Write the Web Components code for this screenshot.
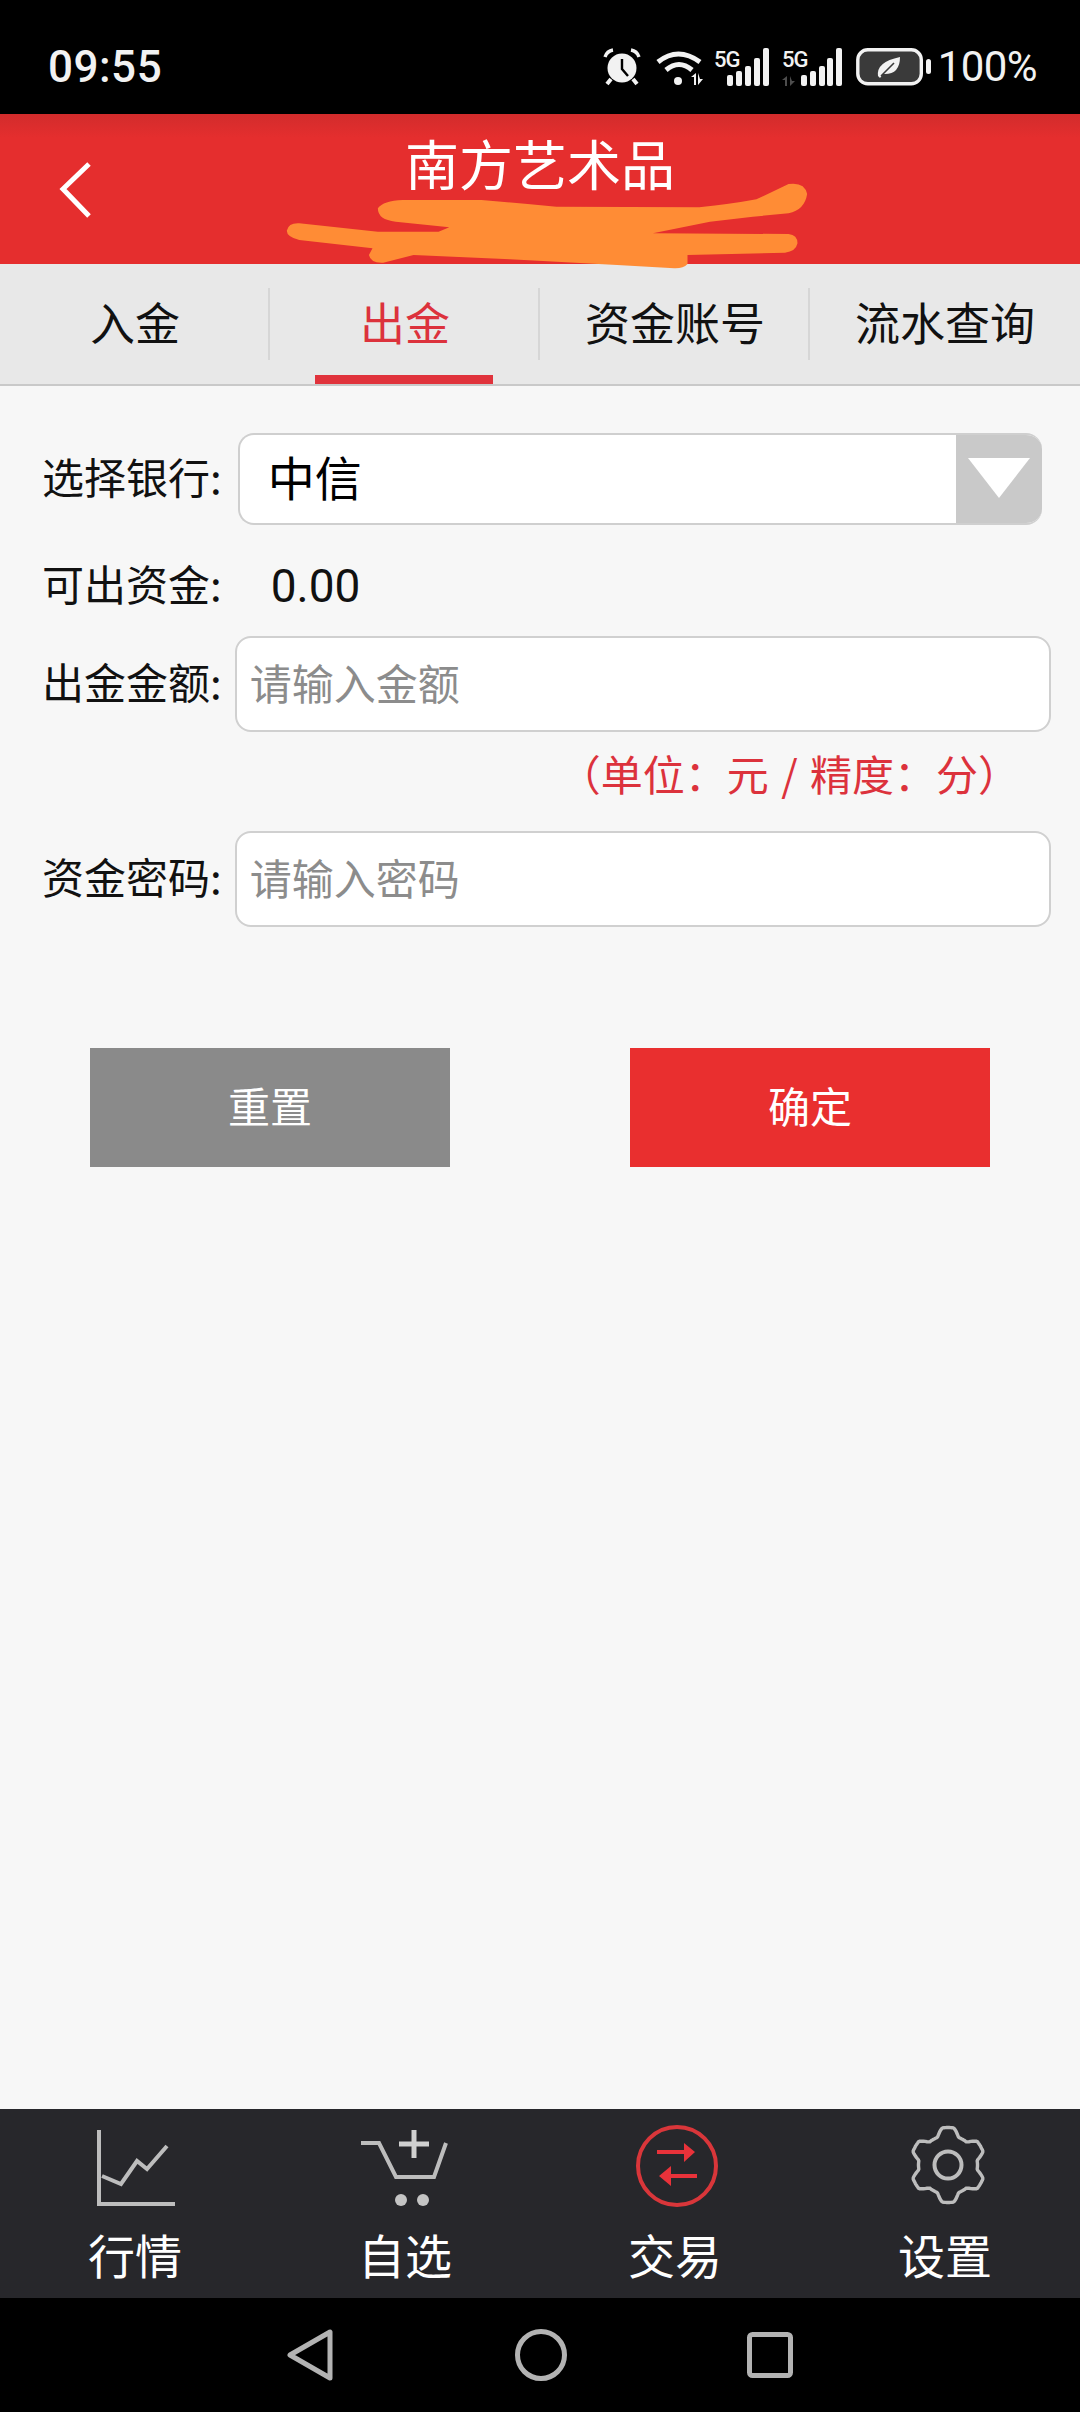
<!DOCTYPE html>
<html lang="zh-CN">
<head>
<meta charset="utf-8">
<title>出金</title>
<style>
  html, body { margin: 0; padding: 0; }
  body {
    width: 1080px;
    height: 2412px;
    overflow: hidden;
    display: flex;
    flex-direction: column;
    background: #f7f7f7;
    font-family: "Noto Sans CJK SC", "Noto Sans", sans-serif;
  }
  withdraw-form { flex: 1; }
</style>
</head>
<body>
  <status-bar time="09:55" level="100%"></status-bar>
  <app-header>南方艺术品</app-header>
  <tab-bar>
    <tab-item>入金</tab-item>
    <tab-item active>出金</tab-item>
    <tab-item>资金账号</tab-item>
    <tab-item>流水查询</tab-item>
  </tab-bar>
  <withdraw-form></withdraw-form>
  <bottom-nav>
    <nav-item icon="chart">行情</nav-item>
    <nav-item icon="cart">自选</nav-item>
    <nav-item icon="trade">交易</nav-item>
    <nav-item icon="gear">设置</nav-item>
  </bottom-nav>
  <system-nav></system-nav>

<script>
/* 상단 상태바 */
class StatusBar extends HTMLElement {
  constructor() {
    super();
    this.attachShadow({ mode: "open" });
    const bars = (xs) => {
      const hs = [11, 15, 20, 28, 38];
      return xs.map((x, i) => `<rect x="${x}" y="${38 - hs[i]}" width="6" height="${hs[i]}" rx="2" fill="#f2f2f2"/>`).join("");
    };
    this.shadowRoot.innerHTML = `
      <style>
        :host {
          display: flex;
          align-items: center;
          height: 114px;
          flex: none;
          padding: 20px 43px 0 48px;
          box-sizing: border-box;
          background: #000;
          color: #f2f2f2;
          font-family: Roboto, "Noto Sans", sans-serif;
        }
        .time { font-size: 44px; font-weight: 500; line-height: 50px; letter-spacing: .5px; }
        .icons { display: flex; align-items: center; margin-left: auto; }
        svg { display: block; flex: none; }
        .wifi { margin-left: 15px; }
        .sig1 { margin-left: 10px; }
        .sig2 { margin-left: 11px; }
        .batt { margin-left: 14px; }
        .level { font-size: 42px; font-weight: 400; line-height: 50px; margin-left: 7px; letter-spacing: -.6px; }
      </style>
      <div class="time"></div>
      <div class="icons">
        <svg width="38" height="38" viewBox="0 0 38 38">
          <circle cx="19" cy="20" r="14.5" fill="#f2f2f2"/>
          <path d="M19 11v10l6 7" fill="none" stroke="#000" stroke-width="2.4"/>
          <path d="M2 9Q4 3 10 2M36 9Q34 3 28 2" fill="none" stroke="#f2f2f2" stroke-width="3.4"/>
          <path d="M8 31l-4 5M30 31l4 5" stroke="#f2f2f2" stroke-width="4"/>
        </svg>
        <svg class="wifi" width="48" height="36" viewBox="0 0 48 36">
          <path d="M2 13Q22 -3 44 13" fill="none" stroke="#f2f2f2" stroke-width="5"/>
          <path d="M10 21Q23 10 36 21" fill="none" stroke="#f2f2f2" stroke-width="5"/>
          <circle cx="22" cy="32" r="4" fill="#f2f2f2"/>
          <path d="M40 24v12h-2v-8l-3 0zM42 24v12l5-6h-3z" fill="#f2f2f2"/>
        </svg>
        <svg class="sig1" width="57" height="38" viewBox="0 0 57 38">
          <text x="0" y="19" font-family="Roboto" font-size="22" font-weight="500" letter-spacing="-1" fill="#f2f2f2">5G</text>
          ${bars([13, 22, 31, 40, 49])}
        </svg>
        <svg class="sig2" width="60" height="38" viewBox="0 0 60 38">
          <text x="0" y="19" font-family="Roboto" font-size="22" font-weight="500" letter-spacing="-1" fill="#f2f2f2">5G</text>
          <path d="M5 28v10h-2v-6l-3 0zM8 28v10l5-5h-3z" fill="#4d4d4d"/>
          ${bars([19, 28, 37, 45, 54])}
        </svg>
        <svg class="batt" width="75" height="38" viewBox="0 0 75 38">
          <rect x="1.8" y="1.8" width="63.5" height="34" rx="10" fill="#3a3a3a" stroke="#f2f2f2" stroke-width="3.4"/>
          <rect x="70" y="11" width="5" height="15" rx="2.5" fill="#f2f2f2"/>
          <path d="M22 28Q20 14 44 9Q44 27 27 26L24 30z" fill="#f2f2f2"/>
          <path d="M25 28L38 15" stroke="#3a3a3a" stroke-width="1.6"/>
        </svg>
        <div class="level"></div>
      </div>`;
    this.shadowRoot.querySelector(".time").textContent = this.getAttribute("time");
    this.shadowRoot.querySelector(".level").textContent = this.getAttribute("level");
  }
}
customElements.define("status-bar", StatusBar);

/* 헤더 + 주황색 낙서 */
class AppHeader extends HTMLElement {
  constructor() {
    super();
    this.attachShadow({ mode: "open" });
    this.shadowRoot.innerHTML = `
      <style>
        :host {
          display: block;
          position: relative;
          z-index: 2;
          flex: none;
          height: 150px;
          padding-top: 17px;
          box-sizing: border-box;
          background: linear-gradient(#d22c2c, #e52e2e 24px);
          color: #fff;
          text-align: center;
          font-size: 54px;
          line-height: 64px;
        }
        .back { position: absolute; left: 55px; top: 44px; }
        .scrawl { position: absolute; left: 260px; top: 6px; }
      </style>
      <svg class="back" width="40" height="64" viewBox="0 0 40 64">
        <path d="M34 6L8 31L34 58" fill="none" stroke="#fff" stroke-width="5"/>
      </svg>
      <slot></slot>
      <svg class="scrawl" width="560" height="160" viewBox="0 0 1568 480" preserveAspectRatio="none">
        <path fill="#ff8c35" d="M330 265Q345 242 400 240L620 240Q730 250 830 260L1230 262Q1320 252 1390 238L1480 192Q1525 185 1532 222Q1525 270 1480 280L1380 290L1260 305L1100 340L1480 342Q1505 345 1505 370Q1500 395 1470 398L1197 405L1197 432Q1185 446 1160 445L1000 435L700 418L430 405L345 428Q310 430 305 405L315 385L110 360Q75 350 75 332Q80 308 110 310L330 335L500 335L530 322L380 305Q330 300 330 265Z"/>
      </svg>`;
  }
}
customElements.define("app-header", AppHeader);

class TabBar extends HTMLElement {
  constructor() {
    super();
    this.attachShadow({ mode: "open" });
    this.shadowRoot.innerHTML = `
      <style>
        :host {
          display: grid;
          grid-template-columns: repeat(4, 1fr);
          flex: none;
          height: 122px;
          box-sizing: border-box;
          background: #e8e8e8;
          border-bottom: 2px solid #c9c9c9;
        }
      </style>
      <slot></slot>`;
  }
}
customElements.define("tab-bar", TabBar);

class TabItem extends HTMLElement {
  constructor() {
    super();
    this.attachShadow({ mode: "open" });
    this.shadowRoot.innerHTML = `
      <style>
        :host {
          display: flex;
          position: relative;
          justify-content: center;
          padding-top: 26px;
          box-sizing: border-box;
          font-size: 45px;
          line-height: 64px;
          color: #111;
        }
        :host(:not(:last-child))::after {
          content: "";
          position: absolute;
          right: 0;
          top: 24px;
          width: 2px;
          height: 72px;
          background: #d6d6d6;
        }
        :host([active]) { color: #dc323c; }
        :host([active])::before {
          content: "";
          position: absolute;
          left: 45px;
          bottom: 0;
          width: 178px;
          height: 9px;
          background: #e0333c;
        }
      </style>
      <slot></slot>`;
  }
}
customElements.define("tab-item", TabItem);

class FormRow extends HTMLElement {
  constructor() {
    super();
    this.attachShadow({ mode: "open" });
    this.shadowRoot.innerHTML = `
      <style>
        :host {
          display: flex;
          align-items: center;
          font-size: 42px;
          color: #111;
        }
        .label { flex: none; white-space: nowrap; padding-bottom: 8px; }
      </style>
      <div class="label"></div>
      <slot></slot>`;
    this.shadowRoot.querySelector(".label").textContent = this.getAttribute("label");
  }
}
customElements.define("form-row", FormRow);

class BankSelect extends HTMLElement {
  constructor() {
    super();
    this.attachShadow({ mode: "open" });
    this.shadowRoot.innerHTML = `
      <style>
        :host {
          display: flex;
          align-items: center;
          flex: none;
          width: 804px;
          height: 92px;
          margin-left: 16px;
          box-sizing: border-box;
          background: #fff;
          border: 2px solid #cfcfcf;
          border-right: 0;
          border-radius: 16px;
          font-size: 47px;
          color: #000;
          overflow: hidden;
        }
        .value { flex: 1; padding: 0 0 8px 28px; }
        .arrow {
          display: flex;
          align-items: center;
          justify-content: center;
          flex: none;
          width: 86px;
          height: 92px;
          margin-top: -2px;
          margin-bottom: -2px;
          background: #c9c9c9;
        }
        svg { display: block; margin-top: -2px; }
      </style>
      <div class="value"><slot></slot></div>
      <div class="arrow">
        <svg width="62" height="40" viewBox="0 0 62 40"><path d="M0 0H62L31 40Z" fill="#fff"/></svg>
      </div>`;
  }
}
customElements.define("bank-select", BankSelect);

class FieldInput extends HTMLElement {
  constructor() {
    super();
    this.attachShadow({ mode: "open" });
    this.shadowRoot.innerHTML = `
      <style>
        :host {
          display: flex;
          align-items: center;
          flex: none;
          width: 816px;
          height: 96px;
          margin-left: 13px;
          padding: 0 0 6px 13px;
          box-sizing: border-box;
          background: #fff;
          border: 2px solid #d0d0d0;
          border-radius: 16px;
          font-size: 42px;
          color: #8c8c8c;
        }
      </style>
      <slot></slot>`;
  }
}
customElements.define("field-input", FieldInput);

class ActionButton extends HTMLElement {
  constructor() {
    super();
    this.attachShadow({ mode: "open" });
    this.shadowRoot.innerHTML = `
      <style>
        :host {
          display: flex;
          align-items: center;
          justify-content: center;
          width: 360px;
          height: 119px;
          padding-bottom: 6px;
          box-sizing: border-box;
          background: #8a8a8a;
          color: #fff;
          font-size: 42px;
        }
        :host([primary]) { background: #e92f2f; }
      </style>
      <slot></slot>`;
  }
}
customElements.define("action-button", ActionButton);

class WithdrawForm extends HTMLElement {
  constructor() {
    super();
    this.attachShadow({ mode: "open" });
    this.shadowRoot.innerHTML = `
      <style>
        :host { display: block; padding: 47px 30px 0 42px; box-sizing: border-box; }
        .amount { margin-left: 49px; font-size: 46px; color: #111; font-family: Roboto, sans-serif; }
        .available { margin-top: 36px; height: 50px; }
        .money { margin-top: 25px; }
        .hint {
          margin-top: 13px;
          height: 56px;
          line-height: 56px;
          padding-right: 30px;
          text-align: right;
          font-size: 42px;
          word-spacing: 3px;
          color: #dc323c;
        }
        .password { margin-top: 30px; }
        .actions {
          display: flex;
          justify-content: space-between;
          margin: 121px 60px 0 48px;
        }
      </style>
      <form-row label="选择银行:"><bank-select>中信</bank-select></form-row>
      <form-row class="available" label="可出资金:"><span class="amount">0.00</span></form-row>
      <form-row class="money" label="出金金额:"><field-input>请输入金额</field-input></form-row>
      <div class="hint">（单位：元 / 精度：分）</div>
      <form-row class="password" label="资金密码:"><field-input>请输入密码</field-input></form-row>
      <div class="actions">
        <action-button>重置</action-button>
        <action-button primary>确定</action-button>
      </div>`;
  }
}
customElements.define("withdraw-form", WithdrawForm);

class BottomNav extends HTMLElement {
  constructor() {
    super();
    this.attachShadow({ mode: "open" });
    this.shadowRoot.innerHTML = `
      <style>
        :host {
          display: grid;
          grid-template-columns: repeat(4, 1fr);
          flex: none;
          height: 189px;
          background: #27272b;
        }
      </style>
      <slot></slot>`;
  }
}
customElements.define("bottom-nav", BottomNav);

class NavItem extends HTMLElement {
  constructor() {
    super();
    this.attachShadow({ mode: "open" });
    const gray = `fill="none" stroke="#bdbdbd" stroke-width="4"`;
    const icons = {
      chart: `<path d="M24 5V79H100" ${gray}/><path d="M27 51L46 59L62 36L72 44L92 21" ${gray}/>`,
      cart: `<path d="M16 18H34L51 52H89L101 18" ${gray}/>
             <path d="M54 19H84M69 5V33" fill="none" stroke="#d0d0d0" stroke-width="5"/>
             <circle cx="56" cy="75" r="6" fill="#c4c4c4"/><circle cx="78" cy="75" r="6" fill="#c4c4c4"/>`,
      trade: `<circle cx="62" cy="41" r="39" fill="none" stroke="#d9363a" stroke-width="4"/>
              <path d="M42 27H70M82 51H54" stroke="#e9323a" stroke-width="4"/>
              <path d="M69 18L80 27L69 37ZM56 41L44 51L56 61Z" fill="#e9323a"/>`,
      gear: `<path d="${NavItem.gearPath(63, 40)}" ${gray.replace('"4"', '"3.4"')}/>
             <circle cx="63" cy="40" r="13.5" ${gray}/>`,
    };
    this.shadowRoot.innerHTML = `
      <style>
        :host {
          display: flex;
          flex-direction: column;
          align-items: center;
          padding-top: 16px;
          box-sizing: border-box;
          color: #fff;
          font-size: 47px;
          line-height: 60px;
        }
        svg { display: block; margin-bottom: 9px; }
      </style>
      <svg width="120" height="90" viewBox="0 0 120 90">${icons[this.getAttribute("icon")]}</svg>
      <slot></slot>`;
  }

  // 톱니 6개짜리 기어 외곽선
  static gearPath(cx, cy) {
    let d = "";
    for (let i = 0; i < 180; i++) {
      const t = (i / 180) * Math.PI * 2;
      const wave = Math.max(-1, Math.min(1, 1.7 * Math.cos(6 * t)));
      const r = 33.5 + 4 * wave;
      const x = cx + r * Math.sin(t);
      const y = cy - r * Math.cos(t);
      d += `${i ? "L" : "M"}${x.toFixed(1)} ${y.toFixed(1)}`;
    }
    return d + "Z";
  }
}
customElements.define("nav-item", NavItem);

class SystemNav extends HTMLElement {
  constructor() {
    super();
    this.attachShadow({ mode: "open" });
    this.shadowRoot.innerHTML = `
      <style>
        :host {
          display: flex;
          align-items: center;
          flex: none;
          height: 114px;
          padding-left: 285px;
          box-sizing: border-box;
          background: #000;
        }
        svg { display: block; flex: none; }
        .home { margin-left: 182px; }
        .recent { margin-left: 180px; }
      </style>
      <svg width="48" height="52" viewBox="0 0 48 52">
        <path d="M5 26L45 3V49Z" fill="none" stroke="#b3b3b3" stroke-width="5" stroke-linejoin="round"/>
      </svg>
      <svg class="home" width="52" height="52" viewBox="0 0 52 52">
        <circle cx="26" cy="26" r="23.5" fill="none" stroke="#b3b3b3" stroke-width="5"/>
      </svg>
      <svg class="recent" width="46" height="46" viewBox="0 0 46 46">
        <rect x="2.5" y="2.5" width="41" height="41" rx="3" fill="none" stroke="#b3b3b3" stroke-width="5"/>
      </svg>`;
  }
}
customElements.define("system-nav", SystemNav);
</script>
</body>
</html>
